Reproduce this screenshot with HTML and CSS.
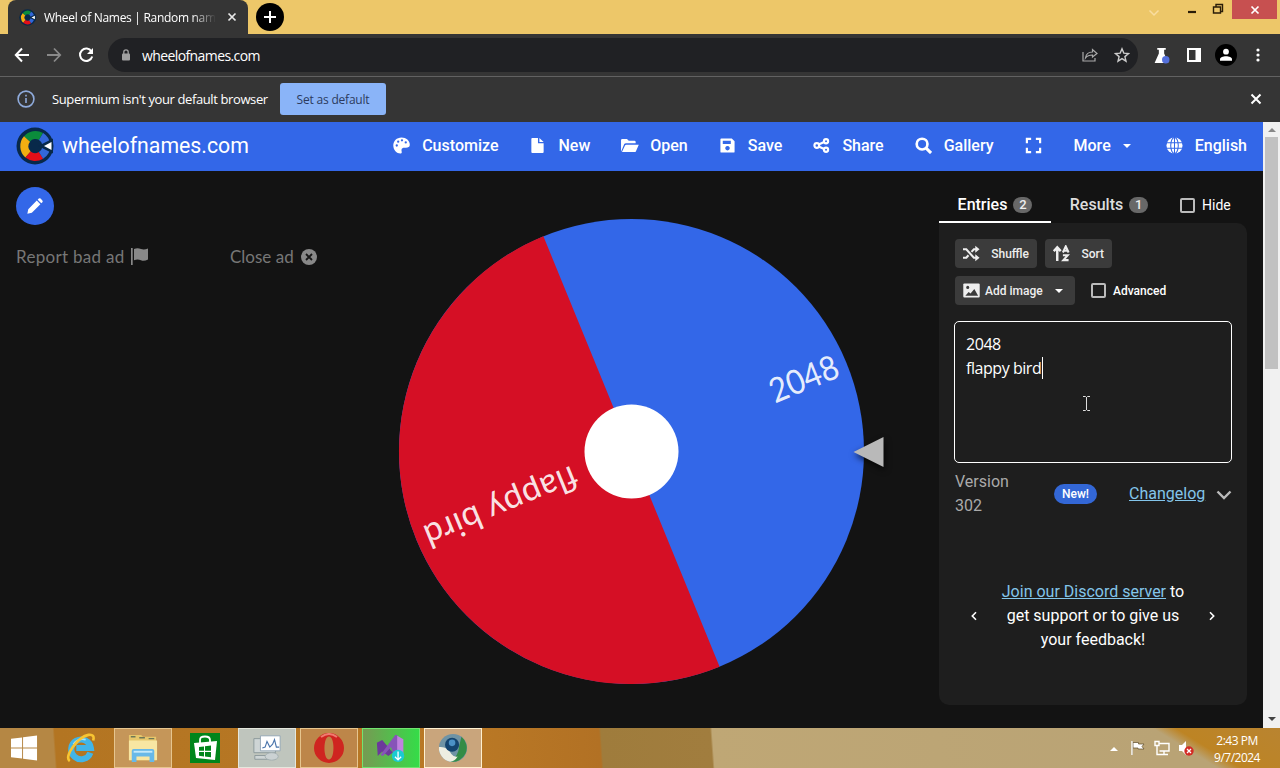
FILE: index.html
```
<!DOCTYPE html>
<html lang="en">
<head>
    <meta charset="UTF-8">
    <meta name="viewport" content="width=device-width, initial-scale=1.0">
    <title>Wheel of Names | Random name picker</title>
    <link rel="stylesheet" href="styles.css">
</head>
<body>
    <svg width="0" height="0" class="defs">
        <symbol id="logo" viewBox="0 0 38 38">
            <circle cx="19" cy="19" r="18.500" fill="#08294a"/>
            <g fill="none" stroke-width="8">
                <path d="M11 12A11 11 0 0 1 25 9.500" stroke="#0b8c3c"/>
                <path d="M12 27.500A11 11 0 0 1 11 12" stroke="#f2ae12"/>
                <path d="M25 28.300A11 11 0 0 1 12 27.500" stroke="#e40f18"/>
                <path d="M25 9.500A11 11 0 0 1 25 28.300" stroke="#3367d8"/>
            </g>
            <path d="M22 19L37 11.500V26.500z" fill="#08294a"/>
            <path d="M28 19L35.500 15V23z" fill="#fff"/>
        </symbol>
    </svg>

    <!-- browser chrome -->
    <header class="tabstrip">
        <div class="tab">
            <svg class="favicon"><use href="#logo"/></svg>
            <span class="tab-title">Wheel of Names | Random name</span>
            <svg class="tab-close" viewBox="0 0 10 10"><path d="M1.500 1.500l7 7M8.500 1.500l-7 7" stroke="#e8e8e8" stroke-width="1.700"/></svg>
        </div>
        <div class="new-tab"><svg viewBox="0 0 28 28"><path d="M14 8v12M8 14h12" stroke="#fff" stroke-width="2"/></svg></div>
        <div class="window-buttons">
            <svg class="tab-search" viewBox="0 0 12 8"><path d="M1.500 1.500L6 6l4.500-4.500" fill="none" stroke="#f9dda0" stroke-width="1.500"/></svg>
            <svg class="minimize" viewBox="0 0 10 4"><path d="M1 2h8" stroke="#2a1d08" stroke-width="2.200"/></svg>
            <svg class="restore" viewBox="0 0 12 12"><path d="M1.500 4h7v6h-7zM4 3.500V1.500h6.500v7H9" fill="none" stroke="#2a1d08" stroke-width="1.400"/></svg>
            <div class="window-close"><svg viewBox="0 0 10 10"><path d="M1.500 1.500l7 7M8.500 1.500l-7 7" stroke="#fff" stroke-width="1.700"/></svg></div>
        </div>
    </header>
    <div class="toolbar">
        <svg class="nav-icon" viewBox="0 0 16 16"><path d="M15 8H2M8 1.500L1.800 8 8 14.500" fill="none" stroke="#fff" stroke-width="2"/></svg>
        <svg class="nav-icon" viewBox="0 0 16 16"><path d="M1 8h13M8 1.500L14.200 8 8 14.500" fill="none" stroke="#8a8a8a" stroke-width="1.800"/></svg>
        <svg class="nav-icon" viewBox="0 0 16 16"><path d="M13.500 4.500A6.200 6.200 0 1 0 14.200 9.500" fill="none" stroke="#fff" stroke-width="2"/><path d="M15 1v6H9z" fill="#fff"/></svg>
        <div class="omnibox">
            <svg class="lock" viewBox="0 0 10 12"><rect x="1" y="4.500" width="8" height="7" rx="1" fill="#a0a0a0"/><path d="M2.800 5V3a2.200 2.200 0 0 1 4.400 0v2" fill="none" stroke="#a0a0a0" stroke-width="1.300"/></svg>
            <span class="url">wheelofnames.com</span>
            <svg class="share-page" viewBox="0 0 16 14"><path d="M1 4v9h12v-3M3.500 10c.5-4 3-6 7-6V1.500L15 5.500l-4.500 3.500V7C7.500 7 5 8 3.500 10z" fill="none" stroke="#aaa" stroke-width="1.200"/></svg>
            <svg class="star" viewBox="0 0 16 16"><path d="M8 1.800l1.800 4.300 4.700.4-3.600 3.100 1.100 4.600L8 11.700l-4 2.500 1.100-4.600L1.500 6.500l4.700-.4z" fill="none" stroke="#ccc" stroke-width="1.400"/></svg>
        </div>
        <svg class="flask" viewBox="0 0 16 16"><path d="M4 1h8v1.500h-1.500V6L14.500 15H1.500L5.500 6V2.500H4z" fill="#fff"/><circle cx="12" cy="12" r="3.500" fill="#5470dc"/></svg>
        <svg class="side-icon" viewBox="0 0 14 14"><path d="M0 0h14v14H0zM2 2v10h6.500V2z" fill="#fff" fill-rule="evenodd"/></svg>
        <svg class="profile" viewBox="0 0 22 22"><circle cx="11" cy="11" r="11" fill="#000"/><circle cx="11" cy="7.700" r="2.900" fill="#fff"/><path d="M5 16.800v-1.600c0-4 12-4 12 0v1.600z" fill="#fff"/></svg>
        <svg class="dots" viewBox="0 0 4 16"><g fill="#fff"><circle cx="2" cy="3" r="1.600"/><circle cx="2" cy="8" r="1.600"/><circle cx="2" cy="13" r="1.600"/></g></svg>
    </div>
    <div class="infobar">
        <svg class="info-icon" viewBox="0 0 18 18"><circle cx="9" cy="9" r="7.900" fill="none" stroke="#8fabdc" stroke-width="1.600"/><path d="M9 8v5M9 4.800v1.800" stroke="#8fabdc" stroke-width="1.600"/></svg>
        <span class="info-text">Supermium isn't your default browser</span>
        <button class="default-btn">Set as default</button>
        <svg class="info-close" viewBox="0 0 12 12"><path d="M1.500 1.500l9 9M10.500 1.500l-9 9" stroke="#fff" stroke-width="2"/></svg>
    </div>

    <!-- web page -->
    <div class="viewport">
        <div class="page">
            <nav class="site-nav">
                <svg class="site-logo"><use href="#logo"/></svg>
                <span class="site-name">wheelofnames.com</span>
                <div class="menu">
                    <a class="item"><svg class="icon" viewBox="0 0 18 18"><path d="M9 .5C4 .5.300 4.300.300 9s3.700 8.500 7.500 8.500c2.600 0 1-2.600 1.200-4 .2-1.800 1.800-2.300 3.500-2.200 3 .2 5.300-.300 5.300-3C17.800 3.700 14 .5 9 .5z" fill="#fff"/><g fill="#3367e8"><circle cx="4" cy="9" r="1.200"/><circle cx="5.500" cy="5" r="1.200"/><circle cx="9.500" cy="3.500" r="1.200"/><circle cx="13.500" cy="5.800" r="1.200"/></g></svg>Customize</a>
                    <a class="item"><svg class="icon" viewBox="0 0 18 18"><path d="M3.500 1h6v5.500h6V16q0 1-1 1h-11q-1 0-1-1V2q0-1 1-1zM11 1l4.500 4.200H11z" fill="#fff"/></svg>New</a>
                    <a class="item"><svg class="icon folder" viewBox="0 0 19 18"><path d="M0 15.500V3.500q0-1.300 1.300-1.300h5L8.200 4h6q1.300 0 1.300 1.300V6.500H5.200q-1.200 0-1.800 1zM1 16l3.200-7q.4-.9 1.300-.9H18.800l-3 6.900q-.4 1-1.400 1z" fill="#fff"/></svg>Open</a>
                    <a class="item"><svg class="icon" viewBox="0 0 18 18"><path d="M2.500 1.500h11l3 3v11q0 1-1 1h-13q-1 0-1-1v-13q0-1 1-1zM4 4v3.500h8.500V4zM9 9.500a2.400 2.400 0 1 0 .01 0z" fill="#fff" fill-rule="evenodd"/></svg>Save</a>
                    <a class="item"><svg class="icon" viewBox="0 0 18 18"><g fill="none" stroke="#fff" stroke-width="2.300"><circle cx="4" cy="9" r="2.500"/><circle cx="13.800" cy="4.500" r="2.200"/><circle cx="13.800" cy="13.500" r="2.200"/><path d="M6 8l5.800-2.700M6 10l5.800 2.700"/></g></svg>Share</a>
                    <a class="item"><svg class="icon" viewBox="0 0 18 18"><circle cx="7.500" cy="7.500" r="5.700" fill="none" stroke="#fff" stroke-width="2.800"/><path d="M11.500 11.500l5.500 5.500" stroke="#fff" stroke-width="3.200"/></svg>Gallery</a>
                    <a class="item"><svg class="icon" viewBox="0 0 18 18"><path d="M2 6.500V2h4.500M11.500 2H16v4.500M16 11.500V16h-4.500M6.500 16H2v-4.500" fill="none" stroke="#fff" stroke-width="2.300"/></svg></a>
                    <a class="item more">More<span class="caret"></span></a>
                    <a class="item"><svg class="icon" viewBox="0 0 18 18"><circle cx="9" cy="9" r="8.500" fill="#fff"/><g fill="none" stroke="#3367e8" stroke-width="1.100"><ellipse cx="9" cy="9" rx="4" ry="8.500"/><path d="M9 0v18M0 6h18M0 12h18"/></g></svg>English</a>
                </div>
            </nav>

            <main class="content">
                <section class="ad-column">
                    <div class="edit-btn"><svg viewBox="0 0 20 20"><path d="M1.500 18.500l1-5L12 4l4 4-9.500 9.500zM13 3l1.200-1.200q1-.9 2 0l2 2q.9 1 0 2L17 7z" fill="#fff"/></svg></div>
                    <div class="ad-links">
                        <span class="report">Report bad ad</span>
                        <svg class="flag" viewBox="0 0 17 17"><path d="M0 0h1.700v17H0zM3 1q3.500-1.500 7 0 3 1.200 7-.5v11q-4 2-7 .7-3.500-1.500-7 0z" fill="#888"/></svg>
                        <span class="close-ad">Close ad</span>
                        <svg class="close-icon" viewBox="0 0 16 16"><circle cx="8" cy="8" r="8" fill="#888"/><path d="M5 5l6 6M11 5l-6 6" stroke="#161616" stroke-width="1.800"/></svg>
                    </div>
                </section>

                <svg class="wheel" viewBox="-248.500 -280.500 540 557">
                    <circle r="232.500" fill="#3367e8"/>
                    <path d="M-88.100 -215.200A232.500 232.500 0 0 0 88.100 215.200z" fill="#d50f25"/>
                    <text transform="rotate(-22.300)" x="151" y="10" textLength="72" lengthAdjust="spacingAndGlyphs">2048</text>
                    <text transform="rotate(157.700)" x="60" y="10" textLength="163">flappy bird</text>
                    <circle r="47" fill="#fff"/>
                    <path class="pointer" d="M222 0.500L252-14.500V15.500z"/>
                </svg>

                <aside class="side">
                    <div class="tabs">
                        <div class="side-tab active">Entries<span class="count">2</span></div>
                        <div class="side-tab results">Results<span class="count">1</span></div>
                        <label class="hide"><span class="checkbox"></span>Hide</label>
                    </div>
                    <div class="card">
                        <div class="actions">
                            <button class="btn shuffle"><svg viewBox="0 0 18 18"><path d="M0 4.500h3.500l8 9H14M0 13.500h3.500l2.300-2.600M9 7.300l2.500-2.800H14" fill="none" stroke="#eee" stroke-width="2.200"/><path d="M13 .8l4.500 3.700L13 8.200zM13 9.800l4.500 3.700-4.500 3.700z" fill="#eee"/></svg>Shuffle</button>
                            <button class="btn sort"><svg viewBox="0 0 18 18"><path d="M4.500 17V4M.8 6.500l3.700-4 3.700 4" fill="none" stroke="#eee" stroke-width="2.600"/><path d="M10.500 8L13.500 1.500 16.500 8M11.500 6h4M10.500 10.800h5.200L11 16h5.500" fill="none" stroke="#eee" stroke-width="2.200"/></svg>Sort</button>
                        </div>
                        <div class="actions">
                            <button class="btn image"><svg viewBox="0 0 18 16"><path d="M1.500.5h15q1.200 0 1.200 1.200v12.600q0 1.200-1.200 1.200h-15Q.3 15.500.3 14.300V1.700Q.3.5 1.500.5z" fill="#eee"/><path d="M2.500 13.500l3.500-4 2 1.800 4-5 4 7.200z" fill="#3b3b3b"/><circle cx="5" cy="4.700" r="1.600" fill="#3b3b3b"/></svg>Add image<span class="caret"></span></button>
                            <label class="advanced"><span class="checkbox"></span>Advanced</label>
                        </div>
                        <div class="entries">
                            <div>2048</div>
                            <div class="typing">flappy bird</div>
                            <svg class="cursor" viewBox="0 0 9 17"><path d="M1 1.500h2.500l1 1 1-1H8M4.500 2v13M1 15.500h2.500l1-1 1 1H8" fill="none" stroke="#ddd"/></svg>
                        </div>
                        <div class="version">
                            <span class="version-text">Version 302</span>
                            <span class="new-badge">New!</span>
                            <a class="link">Changelog</a>
                            <svg class="chevron" viewBox="0 0 16 10"><path d="M1.500 1.500L8 8l6.500-6.500" fill="none" stroke="#bbb" stroke-width="2.400"/></svg>
                        </div>
                        <div class="tip">
                            <svg class="arrow" viewBox="0 0 6 10"><path d="M5 1.200L1.300 5 5 8.800" fill="none" stroke="#fff" stroke-width="1.600"/></svg>
                            <p><a class="link">Join our Discord server</a> to get support or to give us your feedback!</p>
                            <svg class="arrow" viewBox="0 0 6 10"><path d="M1 1.200L4.700 5 1 8.800" fill="none" stroke="#fff" stroke-width="1.600"/></svg>
                        </div>
                    </div>
                </aside>
            </main>
        </div>
        <div class="scrollbar">
            <svg viewBox="0 0 8 5"><path d="M0 5l4-4 4 4z" fill="#888"/></svg>
            <div class="thumb"></div>
            <svg class="down" viewBox="0 0 8 5"><path d="M0 0l4 4 4-4z" fill="#444"/></svg>
        </div>
    </div>

    <footer class="taskbar">
        <div class="task start"><svg viewBox="0 0 28 26"><path d="M0 3.500L11.500 2v10.500H0zM12.500 1.800L27 0v12.500H12.500zM0 13.500h11.500V24L0 22.500zM12.500 13.500H27V26l-14.500-1.800z" fill="#fff"/></svg></div>
        <div class="task"><svg viewBox="0 0 32 32"><path d="M26 21A10.500 10.500 0 1 1 26.500 16H11" fill="none" stroke="#42b5e8" stroke-width="6.500"/><path d="M8 12Q13 5 21 7" fill="none" stroke="#a5e3fa" stroke-width="2"/><path d="M4 30C-3 25 13 4 24 2q7-1 5 6" fill="none" stroke="#f8c531" stroke-width="2.800"/></svg></div>
        <div class="task open explorer"><svg viewBox="0 0 32 32"><path d="M1 5V2h13l2 2h14v25H1z" fill="#e6c66b"/><path d="M1 8h30v21H1z" fill="#f8e6a2"/><path d="M3 4h5M12 5h6M22 6h6" stroke="#6d7856" stroke-width="1.500"/><path d="M4 31V19q0-2 2-2h20q2 0 2 2v12h-5v-6H9v6z" fill="#68b9e8"/><path d="M6 20h20" stroke="#c5e9fa" stroke-width="2"/></svg></div>
        <div class="task"><svg viewBox="0 0 30 30"><path d="M0 0h30v30H0z" fill="#00851b"/><path d="M10 10V7q0-3.500 5-3.500T20 7v3" fill="none" stroke="#fff" stroke-width="1.800"/><path d="M4 10l23-2-2 19-19-2z" fill="#fff"/><path d="M9 14l5-.6v4.400H9zM15 13.300l6-.7v5.200h-6zM9 19h5v4.400l-5-.6zM15 19h6v5.200l-6-.7z" fill="#00851b"/></svg></div>
        <div class="task open monitor"><svg viewBox="0 0 32 30"><path d="M2 5h23v15H2zM3 23h22v4H3z" fill="#ced5d5" stroke="#8c999b"/><path d="M9 2h21v16H9z" fill="#fff" stroke="#94a6b5"/><path d="M11 15l3-1 2-6 3 6 3-3 2-5 2 8h3" fill="none" stroke="#4974ab" stroke-width="1.200"/><ellipse cx="21" cy="24" rx="7" ry="4" fill="#cbd2d3" stroke="#a3afb1"/></svg></div>
        <div class="task open opera"><svg viewBox="0 0 30 30"><path d="M15 0a15 15 0 0 0 0 30 15 15 0 0 0 0-30zM15 3.500c6 0 6 23 0 23s-6-23 0-23z" fill="#cf2520" fill-rule="evenodd"/><path d="M7 4q8-6 16 0" fill="none" stroke="#f07b70" stroke-width="2"/></svg></div>
        <div class="task open studio"><svg viewBox="0 0 34 32"><path d="M1 10l6-3 12 14-5 4L7 20l-5 5z" fill="#6c399b"/><path d="M5 24L22 1l3 1v23l-4 2-4-12-9 10z" fill="#8754b8"/><path d="M24 2l7 4v18l-7 4z" fill="#c082df"/><circle cx="25" cy="25" r="7" fill="#1acbd2"/><path d="M25 20v9M21.500 26l3.500 3.500 3.500-3.500" fill="none" stroke="#fff" stroke-width="1.500"/></svg></div>
        <div class="task open super"><svg viewBox="0 0 32 32"><circle cx="16" cy="16" r="15" fill="#6f93a5"/><path d="M25 4A15 15 0 0 1 13 30.500q9-6 9.500-16.500z" fill="#338c46"/><path d="M1 15q9-1 13 7 3 4 7 3-3 5-8 5.700A15 15 0 0 1 1 15z" fill="#eeeee2"/><circle cx="15" cy="12.500" r="7.500" fill="#14446f"/><circle cx="15" cy="10.500" r="3.500" fill="#4b91c6"/></svg></div>
        <div class="tray">
            <svg class="tray-up" viewBox="0 0 8 5"><path d="M0 5l4-4 4 4z" fill="#fff"/></svg>
            <svg class="tray-icon" viewBox="0 0 16 16"><path d="M2.500 1v14M3 2.500h5.500v1.500H14l-2 2.500 2 2.500H8V8H3z" fill="#fff" stroke="#5d4a28" stroke-width=".7"/><path d="M2 1v14" stroke="#fff" stroke-width="1.400"/></svg>
            <svg class="tray-icon" viewBox="0 0 16 16"><path d="M5.500 3.500H15v7.500H5.500M10 11v3M6 14.500h8M1 1.500h4v4H1zM3 6v8.500h4" fill="none" stroke="#fff" stroke-width="1.400"/></svg>
            <svg class="tray-icon" viewBox="0 0 16 16"><path d="M1 5h3l4-4v14l-4-4H1z" fill="#fff"/><circle cx="11" cy="11" r="4.700" fill="#d32c25"/><path d="M9 9l4 4M13 9l-4 4" stroke="#fff" stroke-width="1.300"/></svg>
            <div class="clock">2:43 PM<br>9/7/2024</div>
        </div>
    </footer>
</body>
</html>
```
FILE: styles.css
```
* {
    box-sizing: border-box;
}
body {
    margin: 0;
    width: 1280px;
    height: 768px;
    overflow: hidden;
    background-color: #131313;
    color: #fff;
    font-family: "Open Sans", "Noto Sans", sans-serif;
}
svg {
    display: block;
    flex-shrink: 0;
}
.defs {
    display: none;
}
button {
    border: none;
    font-family: inherit;
}

/* browser */
.tabstrip {
    display: flex;
    height: 34px;
    padding-left: 8px;
    background-color: #edc769;
}
.tab {
    display: flex;
    align-items: center;
    width: 240px;
    height: 34px;
    padding: 0 10px 0 11px;
    background-color: #353535;
    border-radius: 8px 8px 0 0;
}
.favicon {
    width: 17px;
    height: 17px;
}
.tab-title {
    width: 172px;
    margin-left: 8px;
    overflow: hidden;
    white-space: nowrap;
    font-size: 12px;
    letter-spacing: -0.3px;
    -webkit-mask-image: linear-gradient(90deg, #000 148px, transparent 172px);
    mask-image: linear-gradient(90deg, #000 148px, transparent 172px);
}
.tab-close {
    width: 10px;
    height: 10px;
    margin-left: 11px;
}
.new-tab {
    width: 28px;
    height: 28px;
    margin: 3px 0 0 8px;
    border-radius: 50%;
    background-color: #000;
}
.window-buttons {
    display: flex;
    margin-left: auto;
    padding-right: 3px;
}
.tab-search {
    width: 12px;
    height: 8px;
    margin: 9px 27px 0 0;
}
.minimize {
    width: 10px;
    height: 4px;
    margin: 10px 15px 0 0;
}
.restore {
    width: 12px;
    height: 12px;
    margin: 3px 8px 0 0;
}
.window-close {
    display: flex;
    align-items: center;
    justify-content: center;
    width: 45px;
    height: 19px;
    background-color: #c75050;
}
.window-close svg {
    width: 10px;
    height: 10px;
}
.toolbar {
    display: flex;
    align-items: center;
    height: 43px;
    padding: 0 20px 0 14px;
    background-color: #353535;
    border-bottom: 1px solid #626262;
}
.nav-icon {
    width: 16px;
    height: 16px;
    margin-right: 16px;
}
.omnibox {
    display: flex;
    align-items: center;
    flex: 1;
    height: 34px;
    margin: 0 15px 0 -2px;
    padding: 0 8px 0 13px;
    border-radius: 17px;
    background-color: #202124;
}
.lock {
    width: 10px;
    height: 12px;
    margin-right: 11px;
}
.url {
    flex: 1;
    font-size: 14px;
    letter-spacing: -0.6px;
}
.share-page {
    width: 16px;
    height: 14px;
    margin-right: 16px;
}
.star {
    width: 16px;
    height: 16px;
}
.flask {
    width: 17px;
    height: 17px;
    margin-right: 17px;
}
.side-icon {
    width: 14px;
    height: 14px;
    margin-right: 14px;
}
.profile {
    width: 22px;
    height: 22px;
    margin-right: 19px;
}
.dots {
    width: 4px;
    height: 16px;
}
.infobar {
    display: flex;
    align-items: center;
    height: 45px;
    padding: 0 18px 1px 17px;
    background-color: #353535;
}
.info-icon {
    width: 18px;
    height: 18px;
}
.info-text {
    width: 216px;
    margin: 0 12px 0 17px;
    font-size: 13px;
    letter-spacing: -0.39px;
    white-space: nowrap;
}
.default-btn {
    width: 106px;
    height: 32px;
    border-radius: 3px;
    background-color: #8ab4f8;
    color: #2c3b5e;
    font-size: 12px;
    letter-spacing: -0.2px;
}
.info-close {
    width: 12px;
    height: 12px;
    margin-left: auto;
}

/* site */
.viewport {
    display: flex;
    height: 606px;
    font-family: Roboto, sans-serif;
}
.page {
    width: 1263px;
    background-color: #131313;
}
.site-nav {
    display: flex;
    align-items: center;
    height: 49px;
    padding: 0 16px 2px;
    background-color: #3367e8;
}
.site-logo {
    width: 38px;
    height: 38px;
}
.site-name {
    margin-left: 8px;
    font-size: 21.3px;
}
.menu {
    display: flex;
    align-items: center;
    gap: 31px;
    margin-left: auto;
    font-size: 16px;
    font-weight: 500;
}
.item {
    display: flex;
    align-items: center;
    gap: 12px;
}
.icon {
    width: 17px;
    height: 17px;
}
.icon.folder {
    width: 18px;
    margin-right: -1px;
}
.caret {
    border: 4px solid transparent;
    border-top-color: #fff;
    border-bottom: 0;
}
.more {
    margin-left: 1px;
}
.more .caret {
    margin-right: 4px;
}
.content {
    display: grid;
    grid-template-columns: 367px 540px 324px;
    padding-left: 16px;
    height: 557px;
}
.edit-btn {
    display: flex;
    align-items: center;
    justify-content: center;
    width: 38px;
    height: 38px;
    margin-top: 16px;
    border-radius: 50%;
    background-color: #3367e8;
}
.edit-btn svg {
    width: 18px;
    height: 18px;
}
.ad-links {
    display: flex;
    align-items: center;
    margin-top: 19px;
    color: #777;
    font-family: Lato, sans-serif;
    font-size: 17px;
    line-height: 24px;
    white-space: nowrap;
}
.report,
.close-ad {
    padding-top: 1px;
}
.report {
    width: 108px;
    margin-right: 7px;
    letter-spacing: 0.3px;
}
.flag {
    width: 17px;
    height: 17px;
    margin-right: 82px;
}
.close-ad {
    width: 64px;
    margin-right: 7px;
}
.close-icon {
    width: 16px;
    height: 16px;
}
.wheel {
    width: 540px;
    height: 557px;
}
.wheel text {
    fill: #fff;
    fill-opacity: 0.9;
    font-family: Lato, sans-serif;
    font-size: 34px;
    font-weight: 400;
}
.pointer {
    fill: #b9b9b9;
    filter: drop-shadow(1px 3px 3px rgba(0, 0, 0, 0.7));
}
.side {
    margin-left: 16px;
    width: 308px;
}
.tabs {
    display: flex;
    height: 52px;
    padding-top: 16px;
}
.side-tab {
    display: flex;
    align-items: center;
    justify-content: center;
    width: 112px;
    height: 36px;
    border-bottom: 2px solid transparent;
    color: #ddd;
    font-size: 16px;
    font-weight: 500;
}
.side-tab.active {
    border-color: #fff;
    color: #fff;
}
.side-tab.results {
    padding-left: 4px;
}
.count {
    width: 19px;
    height: 16px;
    margin: 1px 0 0 6px;
    border-radius: 8px;
    background-color: #686868;
    color: #eee;
    font-size: 13px;
    line-height: 16px;
    text-align: center;
}
.hide,
.advanced {
    display: flex;
    align-items: center;
    font-size: 14px;
    white-space: nowrap;
}
.hide {
    height: 36px;
    margin-left: 17px;
}
.checkbox {
    width: 15px;
    height: 15px;
    margin-right: 7px;
    border: 2px solid #bbb;
    border-radius: 2px;
}
.card {
    height: 482px;
    padding: 16px 15px 0;
    border-radius: 0 10px 10px 10px;
    background-color: #1e1e1e;
}
.actions {
    display: flex;
    align-items: center;
    margin: 0 0 8px 1px;
}
.btn {
    display: flex;
    align-items: center;
    height: 29px;
    padding: 0 8px;
    border-radius: 4px;
    background-color: #3b3b3b;
    color: #eee;
    font-size: 12px;
    font-weight: 500;
}
.btn svg {
    width: 17px;
    height: 17px;
}
.shuffle {
    width: 82px;
    margin-right: 8px;
    justify-content: space-between;
}
.sort {
    width: 67px;
    justify-content: space-between;
}
.image {
    width: 120px;
    gap: 5px;
}
.image .caret {
    margin-left: 7px;
}
.advanced {
    margin-left: 16px;
    font-size: 12px;
    font-weight: 500;
}
.entries {
    position: relative;
    height: 142px;
    margin-top: 16px;
    padding: 10px 11px;
    border: 1px solid #fff;
    border-radius: 5px;
    font-family: "Open Sans", "Noto Sans", sans-serif;
    font-size: 16px;
    line-height: 24px;
    letter-spacing: -0.45px;
}
.typing {
    width: 77px;
    white-space: nowrap;
    border-right: 1px solid #fff;
    line-height: 22px;
    margin-top: 1px;
}
.cursor {
    position: absolute;
    left: 127px;
    top: 73px;
    width: 9px;
    height: 17px;
}
.version {
    display: flex;
    align-items: center;
    height: 48px;
    margin: 7px 0 0 1px;
    color: #aaa;
    font-size: 16px;
    line-height: 24px;
}
.version-text {
    width: 58px;
}
.new-badge {
    width: 43px;
    height: 20px;
    margin: 0 32px 0 41px;
    border-radius: 10px;
    background-color: #3367d6;
    color: #fff;
    font-size: 12px;
    font-weight: 500;
    line-height: 20px;
    text-align: center;
}
.link {
    color: #83c5ea;
    text-decoration: underline;
}
.chevron {
    width: 16px;
    height: 10px;
    margin: 2px 0 0 auto;
}
.tip {
    display: flex;
    align-items: center;
    justify-content: space-between;
    margin-top: 62px;
    padding: 0 17px;
    font-size: 16px;
    line-height: 24px;
    text-align: center;
}
.tip p {
    width: 200px;
    margin: 0;
}
.arrow {
    width: 6px;
    height: 10px;
}
.scrollbar {
    display: flex;
    flex-direction: column;
    align-items: center;
    width: 17px;
    padding: 5px 0 6px;
    background-color: #f1f1f1;
}
.scrollbar svg {
    width: 8px;
    height: 5px;
}
.thumb {
    width: 13px;
    height: 232px;
    margin-top: 5px;
    background-color: #c1c1c1;
}
.scrollbar .down {
    margin-top: auto;
}

/* taskbar */
.taskbar {
    display: flex;
    gap: 4px;
    height: 40px;
    background: linear-gradient(31.6deg, transparent 638px, #bd8424 650px, #b98430 100%), linear-gradient(86deg, #b58744 55px, #b37522 57px, #b97825 480px, #b27124 600px, #9f7c3c 602px, #a17d3e 711px, #bfa775 713px, #b9a375 1160px);
}
.task {
    display: flex;
    align-items: center;
    justify-content: center;
    width: 58px;
    height: 40px;
}
.task svg {
    width: 30px;
    height: 30px;
}
.start {
    width: 48px;
}
.start svg {
    width: 27px;
    height: 26px;
}
.open {
    border: 1px solid #e6c58e;
    background-color: #c59659;
}
.monitor {
    background-color: #bfc5bd;
    border-color: #e5e7dd;
}
.opera {
    background-color: #bd8649;
}
.studio {
    background: linear-gradient(90deg, #769a53, #35dc48);
    border-color: #72e570;
}
.super {
    background-color: #c9a57c;
    border-color: #fff0cf;
}
.tray {
    display: flex;
    align-items: center;
    margin-left: auto;
    padding-right: 14px;
}
.tray-up {
    width: 8px;
    height: 5px;
    margin-right: 12px;
}
.tray-icon {
    width: 16px;
    height: 16px;
    margin-right: 8px;
}
.clock {
    width: 58px;
    margin: 2px 0 0 6px;
    font-size: 12px;
    line-height: 17px;
    letter-spacing: -0.5px;
    text-align: center;
    white-space: nowrap;
}
```
